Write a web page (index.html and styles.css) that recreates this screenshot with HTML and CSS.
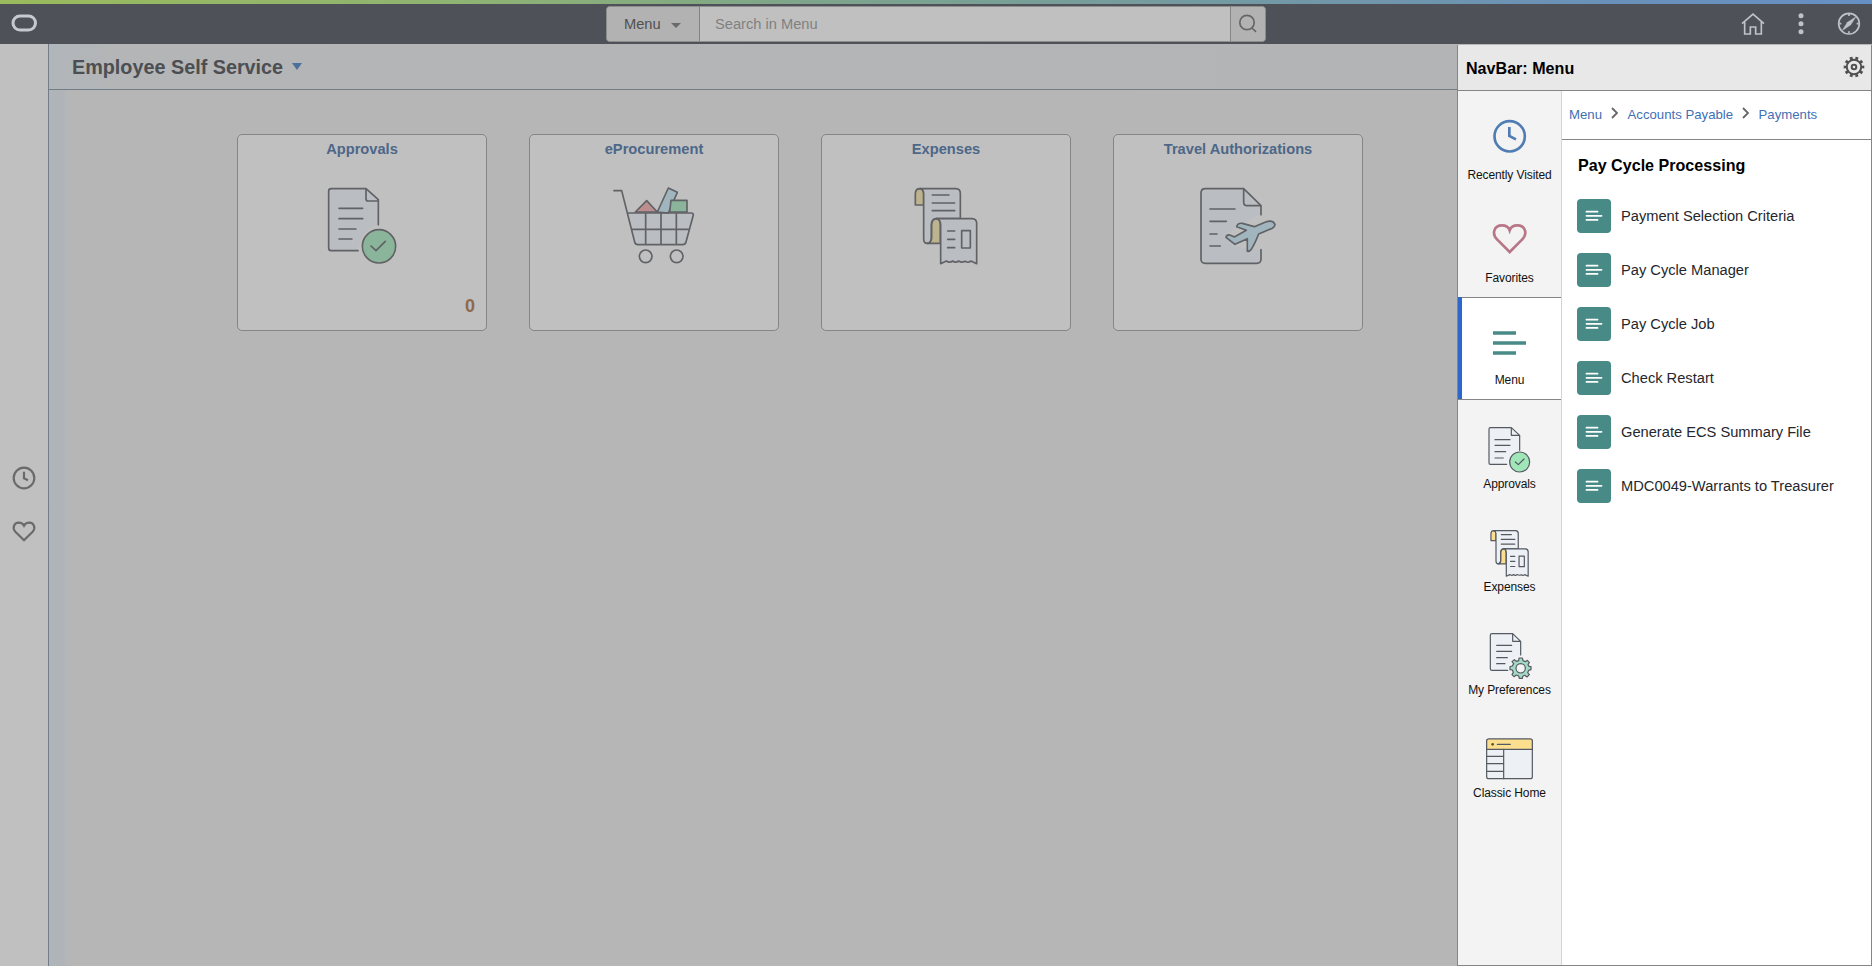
FILE: index.html
```html
<!DOCTYPE html>
<html lang="en">
<head>
<meta charset="utf-8">
<title>Employee Self Service</title>
<link rel="stylesheet" href="styles.css">
</head>
<body>
<header class="topbar">
  <svg class="logo" viewBox="0 0 27 19"><rect x="2" y="2" width="22.5" height="14" rx="7"/></svg>
  <div class="search">
    <button class="search-scope">Menu<span class="caret"></span></button>
    <div class="search-input">Search in Menu</div>
    <button class="search-go" aria-label="Search"><svg width="34" height="34" viewBox="0 0 34 34"><circle cx="16" cy="15.5" r="7.2"/><path d="M21 21l4 3.8"/></svg></button>
  </div>
  <div class="actions">
    <svg width="26" height="26" viewBox="900 34 78 78"><path d="M906 72L939 43L972 72M914 67V103H931V82H947V103H964V67"/></svg>
    <svg width="12" height="26" viewBox="1065 34 36 78"><g class="dots"><circle cx="1083" cy="48" r="7.5"/><circle cx="1083" cy="72" r="7.5"/><circle cx="1083" cy="96" r="7.5"/></g></svg>
    <svg width="26" height="26" viewBox="1190 34 78 78"><circle cx="1229" cy="72" r="31"/><path d="M1229 43v6M1229 95v6M1200 72h6M1252 72h6"/><path class="needle" d="M1250 51L1234 76L1208 93L1224 68Z"/></svg>
  </div>
</header>
<div class="body">
  <aside class="rail">
    <svg width="28" height="28" viewBox="30 72 84 84"><circle cx="72" cy="114" r="31"/><path d="M72 95V115L84 121"/></svg>
    <svg width="28" height="28" viewBox="30 231 84 84"><path d="M72 301L46 275C36 264 42 248 56 248C64 248 69 251 72 257C75 251 80 248 88 248C102 248 108 264 98 275Z"/></svg>
  </aside>
  <main class="main">
    <div class="titlebar"><h1>Employee Self Service</h1><span class="title-caret"></span></div>
    <div class="content">
      <section class="card"><h2>Approvals</h2>
        <svg width="80" height="80" viewBox="306 198 240 240"><path class="paper" d="M414 392H333Q326 392 326 384V213Q326 206 334 206H438L475 239V314Q424 324 414 392Z"/><path class="line" d="M414 392H333Q326 392 326 384V213Q326 206 334 206H438L475 239V314M438 206V237Q438 243 444 243H475M357 265H428M357 296H428M357 327H408M357 357H396"/><circle class="green line" cx="477" cy="379" r="50"/><path class="line" d="M453 378L468 392L496 364"/></svg>
        <b class="count">0</b>
      </section>
      <section class="card"><h2>eProcurement</h2>
        <svg width="86" height="80" viewBox="273 198 258 240"><path class="paper" d="M324 279H521L496 373H347Z"/><path class="red line" d="M346 276L380 242L412 276Z"/><path class="blue line" d="M412 276L445 204L472 217L445 279Z"/><path class="green line" d="M453 241H501V276H449Z"/><path class="line" d="M282 212H305L344 366Q346 374 354 374H488Q496 374 498 366L520 285Q520 279 514 279H322M336 328H508M377 279V373M423 279V373M469 279V373"/><circle class="line" cx="377" cy="409" r="19"/><circle class="line" cx="470" cy="409" r="19"/></svg>
      </section>
      <section class="card"><h2>Expenses</h2>
        <svg width="80" height="80" viewBox="288 198 240 240"><path class="yellow line" d="M341 255H316V220Q317 206 330 206Q341 207 341 220Z"/><path class="paper line" d="M330 206H438Q451 207 451 220V296H380Q364 297 364 315V355Q363 370 352 370Q341 370 341 356V220Q340 208 330 206Z"/><path class="yellow line" d="M352 370H391V315Q391 296 380 296Q365 297 365 315V352Q365 368 352 370Z"/><path class="paper line" d="M378 296H486Q500 297 500 310V431L483 423Q475 430 465 424Q455 429 446 423Q437 430 428 423Q419 430 409 423L392 431V315Q392 298 378 296Z"/><path class="line" d="M367 225H417M367 249H434M367 272H434M413 333H434M413 358H434M413 383H434M455 332H481V384H455Z"/></svg>
      </section>
      <section class="card"><h2>Travel Authorizations</h2>
        <svg width="80" height="80" viewBox="294 198 240 240"><path class="paper" d="M303 206H431L483 257V280L376 345L410 380L483 390V430H303Z"/><path class="line" d="M483 284V257L431 206H316Q303 206 303 219V418Q303 430 316 430H470Q483 430 483 418V389M431 206V246Q431 257 441 257H483M330 267H405M330 304H379M330 342H351M330 378H361"/><path class="blue line" d="M378 352Q380 343 390 345L403 351L439 331L410 320Q413 308 427 310L463 320L497 306Q519 298 525 314Q523 325 506 329L476 342Q465 370 455 386Q448 396 442 394L442 356L405 373Z"/></svg>
      </section>
    </div>
  </main>
  <aside class="navbar">
    <div class="nav-head"><h2>NavBar: Menu</h2><svg width="24" height="24" viewBox="-12 -12 24 24"><circle r="7.2"/><circle r="2.3"/><circle class="teeth" r="8.8" pathLength="80"/></svg></div>
    <div class="nav-body">
      <nav class="nav-tabs">
        <a class="tab"><svg viewBox="54 273 309 222"><g class="big clock"><circle cx="209" cy="409" r="45.5"/><path d="M208 381V408L228 418"/></g></svg><span>Recently Visited</span></a>
        <a class="tab"><svg viewBox="54 42 309 222"><path class="big heart" d="M209 216L172 179C154 162 162 136 186 136C198 136 206 142 209 151C212 142 220 136 232 136C256 136 264 162 246 179Z"/></svg><span>Favorites</span></a>
        <a class="tab active"><svg viewBox="54 351 309 222"><path class="bars" d="M159 459H228M159 489H258M159 519H228"/></svg><span>Menu</span></a>
        <a class="tab"><svg viewBox="54 0 309 222"><g class="fine"><path class="paper" d="M200 193H148V84H214L239 107V151Q206 160 200 193Z"/><path class="line" d="M200 193H151Q147 193 147 188V88Q147 83 151 83H214L239 106V151M214 83V106H239M165 119H210M165 136H210M165 155H197M165 174H190"/><circle class="green line" cx="239" cy="186" r="30"/><path class="line" d="M226 186L235 194L252 177"/></g></svg><span>Approvals</span></a>
        <a class="tab"><svg viewBox="54 309 309 222"><g class="fine receipts" transform="translate(-39 267) scale(.607)"><path class="yellow line" d="M341 255H316V220Q317 206 330 206Q341 207 341 220Z"/><path class="paper line" d="M330 206H438Q451 207 451 220V296H380Q364 297 364 315V355Q363 370 352 370Q341 370 341 356V220Q340 208 330 206Z"/><path class="yellow line" d="M352 370H391V315Q391 296 380 296Q365 297 365 315V352Q365 368 352 370Z"/><path class="paper line" d="M378 296H486Q500 297 500 310V431L483 423Q475 430 465 424Q455 429 446 423Q437 430 428 423Q419 430 409 423L392 431V315Q392 298 378 296Z"/><path class="line" d="M367 225H417M367 249H434M367 272H434M413 333H434M413 358H434M413 383H434M455 332H481V384H455Z"/></g></svg><span>Expenses</span></a>
        <a class="tab"><svg viewBox="54 18 309 222"><g class="fine"><path class="paper" d="M203 211H152V102H218L242 125V168Q210 170 203 211Z"/><path class="line" d="M203 211H156Q151 211 151 206V106Q151 101 156 101H218L242 124V165M218 101V124H242M170 136H215M170 154H215M170 173H202M170 191H195"/><path class="mint line" d="M236 182L237 174H247L249 182L256 185L262 181L268 187L264 194L267 199L273 200V209L266 211L263 218L268 224L261 231L254 226L248 229L247 235H238L236 228L229 225L222 230L216 224L220 217L217 210L210 209V200L217 198L221 191L216 185L223 179L229 184Z"/><circle class="hub line" cx="242" cy="205" r="14"/></g></svg><span>My Preferences</span></a>
        <a class="tab"><svg viewBox="54 327 309 222"><g class="fine"><rect class="paper line" x="140" y="417" width="137" height="119" rx="6"/><path class="yellow line" d="M140 448V423Q140 417 146 417H271Q277 417 277 423V448Z"/><path class="line" d="M191 448V536M140 469H191M140 491H191M140 514H191M172 433H211"/><circle cx="158" cy="433" r="4" fill="#5a5136"/></g></svg><span>Classic Home</span></a>
      </nav>
      <div class="nav-list">
        <div class="crumbs"><a>Menu</a><svg viewBox="0 0 8 12"><path d="M1 1l5 5-5 5"/></svg><a>Accounts Payable</a><svg viewBox="0 0 8 12"><path d="M1 1l5 5-5 5"/></svg><a>Payments</a></div>
        <h3>Pay Cycle Processing</h3>
        <ul>
          <li><svg viewBox="0 0 34 34"><path d="M9.5 12.7H20.5M9.5 16.8H24.5M9.5 20.9H20.5"/></svg>Payment Selection Criteria</li>
          <li><svg viewBox="0 0 34 34"><path d="M9.5 12.7H20.5M9.5 16.8H24.5M9.5 20.9H20.5"/></svg>Pay Cycle Manager</li>
          <li><svg viewBox="0 0 34 34"><path d="M9.5 12.7H20.5M9.5 16.8H24.5M9.5 20.9H20.5"/></svg>Pay Cycle Job</li>
          <li><svg viewBox="0 0 34 34"><path d="M9.5 12.7H20.5M9.5 16.8H24.5M9.5 20.9H20.5"/></svg>Check Restart</li>
          <li><svg viewBox="0 0 34 34"><path d="M9.5 12.7H20.5M9.5 16.8H24.5M9.5 20.9H20.5"/></svg>Generate ECS Summary File</li>
          <li><svg viewBox="0 0 34 34"><path d="M9.5 12.7H20.5M9.5 16.8H24.5M9.5 20.9H20.5"/></svg>MDC0049-Warrants to Treasurer</li>
        </ul>
      </div>
    </div>
  </aside>
</div>
</body>
</html>
```

FILE: styles.css
```css
* { box-sizing: border-box; margin: 0; padding: 0; }
body { width: 1872px; height: 966px; overflow: hidden; display: flex; flex-direction: column; font-family: "Liberation Sans", Arial, sans-serif; background: #b6b6b6; }
svg { display: block; flex: none; fill: none; }

/* Top bar */
.topbar { height: 44px; flex: none; display: grid; grid-template-columns: 606px 660px 1fr; align-items: start; background: linear-gradient(90deg, #9aba5c 0, #8fb373 25%, #7ea58b 43%, #769c9d 60%, #6a91b8 85%, #668fc4 100%) top / 100% 4px no-repeat, #4e5158; }
.logo { width: 27px; height: 19px; margin: 14px 0 0 11px; stroke: #c6c9cd; stroke-width: 3; }
.search { margin-top: 6px; height: 36px; display: flex; border: 1px solid #8d8d8d; border-radius: 4px; overflow: hidden; background: #c0c0c0; font-size: 14.67px; }
.search button { border: 0; background: #b2b2b2; font: inherit; color: #505050; display: flex; align-items: center; }
.search-scope { width: 92px; padding-left: 17px; gap: 10px; }
.caret { margin-top: 3px; border: 5px solid transparent; border-top: 5px solid #6a6a6a; border-bottom: 0; }
.search-input { flex: 1; border: solid #858585; border-width: 0 1px; padding-left: 15px; line-height: 34px; color: #808080; }
.search-go svg { stroke: #666; stroke-width: 1.7; }
.actions { display: flex; margin: 11px 0 0 474px; }
.actions svg { stroke: #bfc2c6; stroke-width: 5; }
.actions svg:nth-child(2) { margin-left: 29px; }
.actions svg:nth-child(3) { margin-left: 29px; }
.actions .dots { fill: #bfc2c6; stroke: none; }
.actions .needle { fill: #bfc2c6; stroke-width: 1; }

.body { flex: 1; display: flex; min-height: 0; }
.rail { width: 49px; flex: none; background: #c0c0c0; border-right: 1px solid #747d87; padding: 420px 0 0 10px; display: flex; flex-direction: column; gap: 25px; }
.rail svg { stroke: #6a6a6a; stroke-width: 6.5; }

.main { flex: 1; background: linear-gradient(90deg, #afb5ba 0, #b0b4b8 14px, #b6b6b6 19px); }
.titlebar { height: 46px; display: flex; align-items: center; padding-left: 23px; border-bottom: 1px solid #737d86; background: linear-gradient(90deg, #b1b6ba, #b3b5b7 60px, #b3b4b6); }
.titlebar h1 { font-size: 19.8px; line-height: 44px; color: #4c4e51; }
.title-caret { margin-left: 9px; border: 5.5px solid transparent; border-top: 7px solid #4c709c; border-bottom: 0; }
.content { display: flex; gap: 42px; padding: 44px 0 0 188px; }
.card { position: relative; width: 250px; height: 197px; border: 1px solid #858585; border-radius: 5px; background: #c0c0c0; display: flex; flex-direction: column; align-items: center; }
.card h2 { font-size: 14.67px; line-height: 20px; margin-top: 4px; color: #4d6788; }
.card svg { margin-top: 27px; stroke-width: 5; }
.count { position: absolute; right: 11px; bottom: 13px; font-size: 18px; line-height: 22px; color: #8f694d; }
.line { stroke: #606265; stroke-linejoin: round; stroke-linecap: round; }
.paper { fill: #babdc1; }
.green { fill: #8ab59b; }
.red { fill: #bd8e8e; }
.blue { fill: #a1b5bf; }
.yellow { fill: #bdb48f; }

/* Navigation panel */
.navbar { width: 415px; flex: none; margin-top: 1px; border: 1px solid #858585; border-top: 0; background: #fff; display: flex; flex-direction: column; }
.nav-head { height: 46px; flex: none; display: flex; align-items: center; justify-content: space-between; padding: 0 5px 0 8px; border-bottom: 1px solid #858585; background: #e8e8e8; }
.nav-head h2 { font-size: 16.1px; margin-top: 2px; }
.nav-head svg { stroke: #505050; stroke-width: 2; margin-top: -2px; }
.nav-head .teeth { stroke-width: 3; stroke-dasharray: 4 4; stroke-dashoffset: 2; }
.nav-body { flex: 1; display: flex; }
.nav-tabs { width: 104px; flex: none; background: #f3f3f3; border-right: 1px solid #d4d4d4; }
.tab { display: block; height: 103px; text-align: center; font-size: 12px; letter-spacing: -.1px; color: #111; line-height: 16px; white-space: nowrap; }
.tab svg { width: 103px; height: 74px; }
.tab span { position: relative; top: 2px; }
.tab.active { position: relative; height: 102px; margin-bottom: 1px; background: #fff; box-shadow: inset 4px 0 #2d66cc, inset 0 1px #858585, 0 1px #858585; }
.tab.active span { top: 1px; }
.big { stroke-width: 8; }
.clock { stroke: #4f7cb3; }
.heart { stroke: #b87788; }
.bars { stroke: #478a86; stroke-width: 10; }
.fine { stroke-width: 3.6; }
.fine .line { stroke: #555a62; }
.fine.receipts { stroke-width: 6; }
.fine .paper { fill: #edf1f6; }
.fine .green { fill: #a0e6b9; }
.fine .yellow { fill: #fbdf8f; }
.fine .mint { fill: #a4d9c3; }
.fine .hub { fill: #f3f3f3; }
.nav-list { flex: 1; }
.crumbs { height: 49px; display: flex; align-items: center; padding: 0 0 2px 7px; border-bottom: 1px solid #858585; font-size: 13.2px; color: #3f70b4; }
.crumbs svg { width: 8px; height: 12px; margin: -2px 8.5px 0 9px; stroke: #666; stroke-width: 1.8; }
h3 { font-size: 16.1px; line-height: 20px; padding: 15px 0 0 16px; }
ul { list-style: none; padding: 24px 0 0 15px; }
li { display: flex; align-items: center; gap: 10px; height: 34px; margin-bottom: 20px; font-size: 14.67px; color: #25272d; }
li svg { width: 34px; height: 34px; border-radius: 4px; background: #478a86; stroke: #fff; stroke-width: 1.8; stroke-linecap: round; }
```
